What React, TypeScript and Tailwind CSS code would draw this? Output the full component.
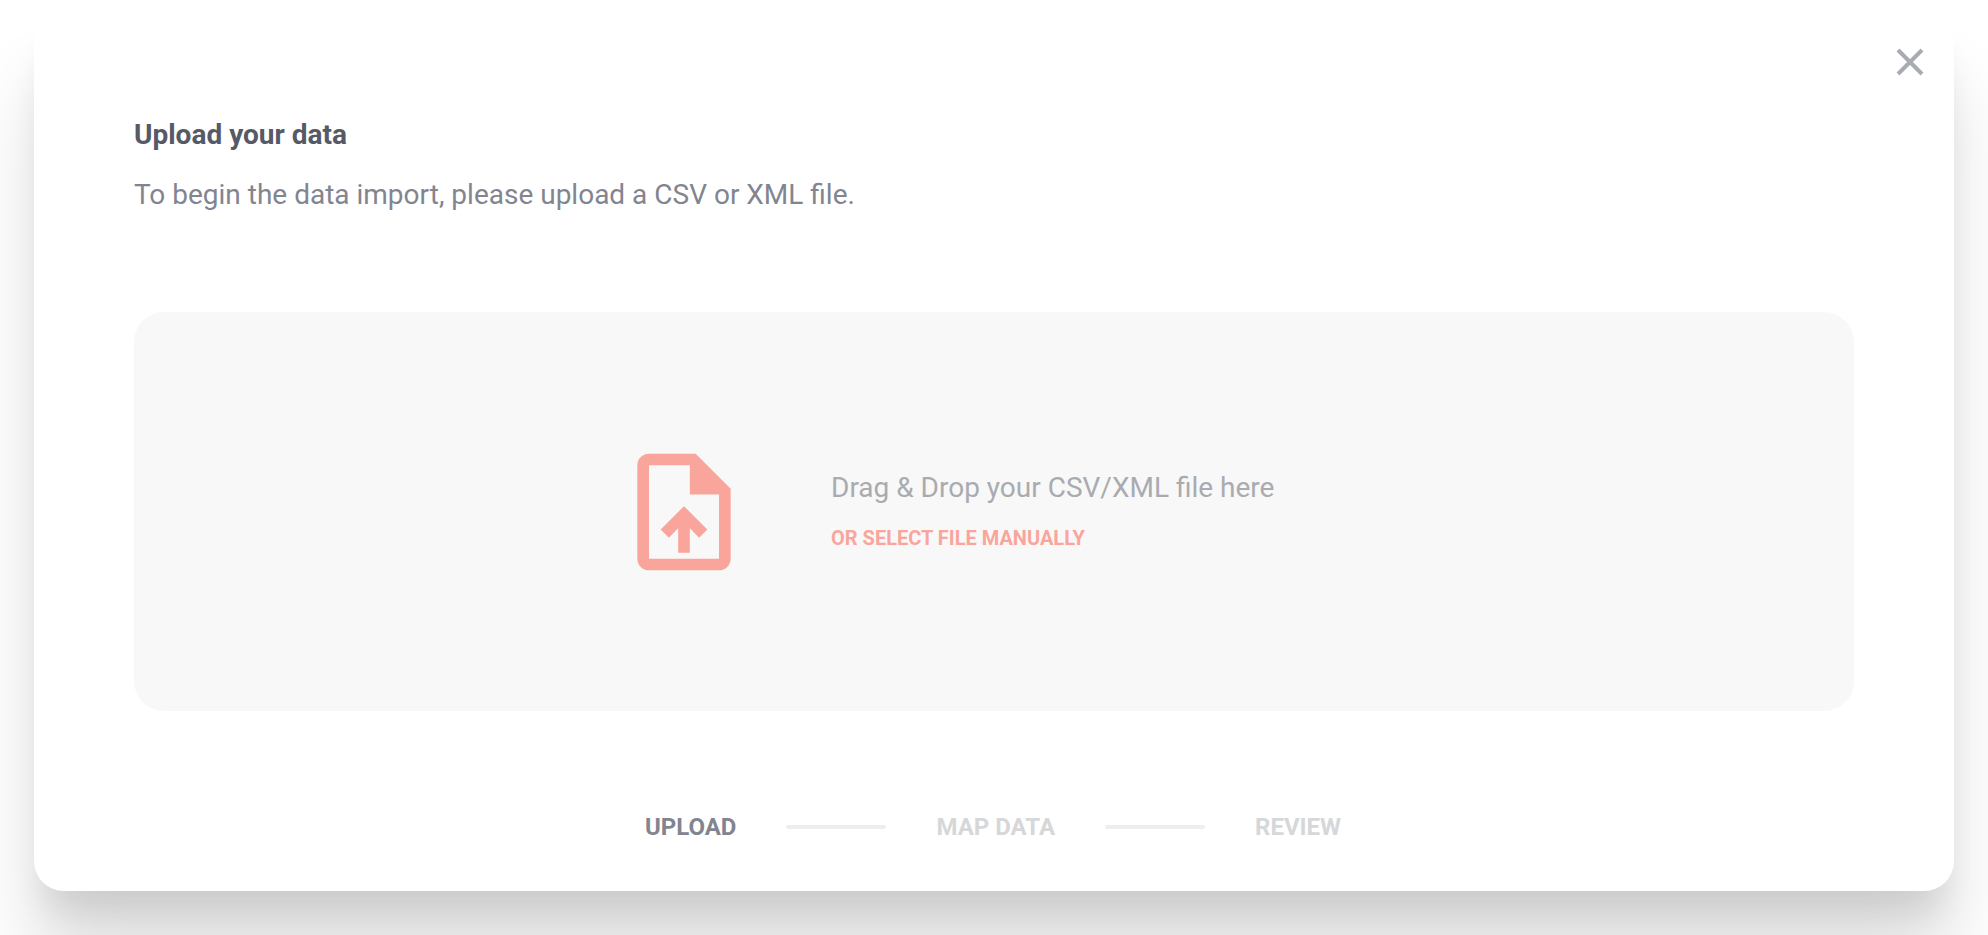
import { useId } from "react";

const steps = ["Upload", "Map data", "Review"];

function FileUploadIcon() {
  return (
    <svg viewBox="0 0 24 24" className="size-[140px] shrink-0 fill-[#faa59b]" aria-hidden="true">
      <path d="M14,2L20,8V20A2,2 0 0,1 18,22H6A2,2 0 0,1 4,20V4A2,2 0 0,1 6,2H14M18,20V9H13V4H6V20H18M12,11L16,15L14.6,16.4L13,14.8V19H11V14.8L9.4,16.4L8,15L12,11Z" />
    </svg>
  );
}

function Dropzone() {
  const id = useId();
  return (
    <section className="flex min-h-[399px] items-center justify-center rounded-[30px] bg-[#f8f8f8]">
      <div className="flex w-[760px] items-center gap-[77px]">
        <FileUploadIcon />
        <div className="flex flex-col items-start">
          <p className="text-[28px] leading-[52px] text-[#a9abb0]">Drag &amp; Drop your CSV/XML file here</p>
          <input id={id} type="file" accept=".csv,.xml" className="peer sr-only" />
          <label htmlFor={id} className="cursor-pointer text-xl leading-[48px] font-bold text-[#faa59b] uppercase">
            Or select file manually
          </label>
        </div>
      </div>
    </section>
  );
}

function Steps() {
  return (
    <ol className="flex items-center justify-center gap-[50px] pr-0.5 text-2xl leading-8 font-bold uppercase">
      {steps.map((step, i) => (
        <li key={step} className="flex items-center gap-[50px]">
          {i > 0 && <span className="h-1 w-[100px] rounded-full bg-[#eeeeee]" />}
          <span
            className={i === 0 ? "text-[#82858f]" : "text-[#d6d7d9]"}
            aria-current={i === 0 ? "step" : undefined}
          >
            {step}
          </span>
        </li>
      ))}
    </ol>
  );
}

export default function App() {
  return (
    <div className="min-h-screen overflow-hidden bg-white px-[34px] pt-3 pb-[42px] font-[Roboto,sans-serif]">
      <main className="relative rounded-[30px] bg-white px-[100px] pt-[101px] pb-12 shadow-[0_70px_72px_rgba(0,0,0,0.13),0_28px_32px_-10px_rgba(0,0,0,0.09)]">
        <button type="button" aria-label="Close" className="absolute top-8 right-[26px] p-1">
          <svg viewBox="0 0 28 28" className="size-7 stroke-[#a9abb2] stroke-4" aria-hidden="true">
            <path d="M2 2L26 26M26 2L2 26" />
          </svg>
        </button>
        <h1 className="text-[28px] leading-[44px] font-bold text-[#555a66]">Upload your data</h1>
        <p className="mt-4 mb-[95px] text-[28px] leading-[44px] text-[#82858f]">
          To begin the data import, please upload a CSV or XML file.
        </p>
        <Dropzone />
        <div className="mt-[100px]">
          <Steps />
        </div>
      </main>
    </div>
  );
}
